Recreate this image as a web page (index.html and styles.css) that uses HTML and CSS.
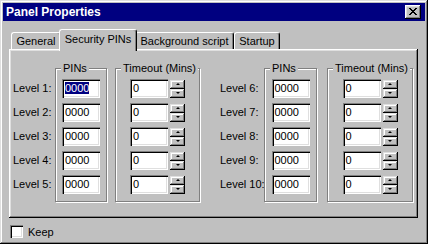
FILE: index.html
```html
<!DOCTYPE html>
<html lang="en">
<head>
    <meta charset="UTF-8">
    <title>Panel Properties</title>
    <link rel="stylesheet" href="styles.css">
</head>
<body>

<div class="window">
    <div class="titlebar">
        <span class="title">Panel Properties</span>
        <div class="close-btn">
            <svg width="8" height="7" viewBox="0 0 8 7" shape-rendering="crispEdges">
                <path fill="#000" d="M0 0h2v1H0z M6 0h2v1H6z M1 1h2v1H1z M5 1h2v1H5z M2 2h4v1H2z M3 3h2v1H3z M2 4h4v1H2z M1 5h2v1H1z M5 5h2v1H5z M0 6h2v1H0z M6 6h2v1H6z"/>
            </svg>
        </div>
    </div>

    <div class="tabs">
        <div class="tab tab-general">General</div>
        <div class="tab tab-pins active">Security PINs</div>
        <div class="tab tab-script">Background script</div>
        <div class="tab tab-startup">Startup</div>
    </div>

    <div class="panel">
        <!-- levels 1 to 5 -->
        <div class="half">
            <div class="labels labels-left">
                <div class="row">Level 1:</div>
                <div class="row">Level 2:</div>
                <div class="row">Level 3:</div>
                <div class="row">Level 4:</div>
                <div class="row">Level 5:</div>
            </div>
            <fieldset class="group pins-left">
                <legend>PINs</legend>
                <div class="row"><div class="field"><span class="selected">0000</span></div></div>
                <div class="row"><div class="field">0000</div></div>
                <div class="row"><div class="field">0000</div></div>
                <div class="row"><div class="field">0000</div></div>
                <div class="row"><div class="field">0000</div></div>
            </fieldset>
            <fieldset class="group timeout-left">
                <legend>Timeout (Mins)</legend>
                <div class="row"><div class="field">0</div><div class="spin"><span class="up"></span><span class="down"></span></div></div>
                <div class="row"><div class="field">0</div><div class="spin"><span class="up"></span><span class="down"></span></div></div>
                <div class="row"><div class="field">0</div><div class="spin"><span class="up"></span><span class="down"></span></div></div>
                <div class="row"><div class="field">0</div><div class="spin"><span class="up"></span><span class="down"></span></div></div>
                <div class="row"><div class="field">0</div><div class="spin"><span class="up"></span><span class="down"></span></div></div>
            </fieldset>
        </div>

        <!-- levels 6 to 10 -->
        <div class="half">
            <div class="labels labels-right">
                <div class="row">Level 6:</div>
                <div class="row">Level 7:</div>
                <div class="row">Level 8:</div>
                <div class="row">Level 9:</div>
                <div class="row">Level 10:</div>
            </div>
            <fieldset class="group pins-right">
                <legend>PINs</legend>
                <div class="row"><div class="field">0000</div></div>
                <div class="row"><div class="field">0000</div></div>
                <div class="row"><div class="field">0000</div></div>
                <div class="row"><div class="field">0000</div></div>
                <div class="row"><div class="field">0000</div></div>
            </fieldset>
            <fieldset class="group timeout-right">
                <legend>Timeout (Mins)</legend>
                <div class="row"><div class="field">0</div><div class="spin"><span class="up"></span><span class="down"></span></div></div>
                <div class="row"><div class="field">0</div><div class="spin"><span class="up"></span><span class="down"></span></div></div>
                <div class="row"><div class="field">0</div><div class="spin"><span class="up"></span><span class="down"></span></div></div>
                <div class="row"><div class="field">0</div><div class="spin"><span class="up"></span><span class="down"></span></div></div>
                <div class="row"><div class="field">0</div><div class="spin"><span class="up"></span><span class="down"></span></div></div>
            </fieldset>
        </div>
    </div>

    <div class="keep">
        <span class="checkbox"></span>
        <span>Keep</span>
    </div>
</div>

</body>
</html>
```

FILE: styles.css
```css
body {
    margin: 0;
    font-family: "Liberation Sans", Arial, sans-serif;
    font-size: 11px;
    color: #000;
    background: #c0c0c0;
}
.window {
    width: 428px;
    height: 244px;
    box-sizing: border-box;
    padding: 3px;
    background: #c0c0c0;
    box-shadow: inset -1px -1px #000, inset 1px 1px #dfdfdf, inset -2px -2px #808080, inset 2px 2px #fff;
}
.titlebar {
    height: 18px;
    background: #000080;
    display: flex;
    align-items: center;
    justify-content: space-between;
    padding: 0 4px 0 3px;
}
.title {
    color: #fff;
    font-weight: bold;
    font-size: 12px;
}
.close-btn {
    width: 16px;
    height: 14px;
    box-sizing: border-box;
    background: #c0c0c0;
    display: flex;
    align-items: center;
    justify-content: center;
    padding: 0 1px 1px 0;
    box-shadow: inset -1px -1px #000, inset 1px 1px #fff, inset -2px -2px #808080, inset 2px 2px #dfdfdf;
}
.close-btn svg {
    display: block;
}

/* tab strip */
.tabs {
    display: flex;
    align-items: flex-end;
    height: 20px;
    margin: 8px 0 0 8px;
    position: relative;
    z-index: 1;
}
.tab {
    height: 17px;
    box-sizing: border-box;
    padding-top: 2px;
    text-align: center;
    white-space: nowrap;
    background: #c0c0c0;
    border-top: 1px solid #fff;
    border-left: 1px solid #fff;
    border-right: 1px solid #000;
    border-radius: 3px 3px 0 0;
    box-shadow: inset -1px 0 #808080;
}
.tab-general { width: 50px; }
.tab-pins { width: 74px; }
.tab-script { width: 99px; }
.tab-startup { width: 46px; }
.tab.active {
    height: 22px;
    width: 78px;
    margin: 0 -2px -2px;
    padding-top: 3px;
    position: relative;
}

/* page */
.panel {
    width: 409px;
    height: 169px;
    box-sizing: border-box;
    margin-left: 6px;
    padding: 13px 0 0 4px;
    display: flex;
    gap: 20px;
    box-shadow: inset -1px -1px #000, inset 1px 1px #fff, inset -2px -2px #808080, inset 2px 2px #dfdfdf;
}
.half {
    display: flex;
    align-items: flex-start;
}
.labels {
    padding-top: 17px;
    display: flex;
    flex-direction: column;
    gap: 5px;
    white-space: nowrap;
}
.labels-left { width: 42px; }
.labels-right { width: 44px; }
.row {
    height: 19px;
    display: flex;
    align-items: center;
}
.labels .row {
    padding-bottom: 2px;
    box-sizing: border-box;
}
.group {
    margin: 0;
    padding: 4px 0 7px;
    min-width: 0;
    box-sizing: border-box;
    border: 1px solid #808080;
    box-shadow: inset 1px 1px #fff, 1px 1px #fff;
    display: flex;
    flex-direction: column;
    align-items: center;
    gap: 5px;
}
.group legend {
    margin-left: 5px;
    padding: 0 2px;
    line-height: 13px;
    white-space: nowrap;
    background: #c0c0c0;
}
.pins-left { width: 52px; }
.timeout-left { width: 85px; margin-left: 8px; }
.pins-right { width: 53px; }
.timeout-right { width: 86px; margin-left: 10px; }

.field {
    width: 38px;
    height: 19px;
    box-sizing: border-box;
    padding: 3px 0 0 3px;
    background: #fff;
    box-shadow: inset 1px 1px #808080, inset 2px 2px #000, inset -1px -1px #fff, inset -2px -2px #dfdfdf;
}
.selected {
    background: #000080;
    color: #fff;
}
.spin {
    width: 15px;
    height: 18px;
    margin-left: 2px;
    display: flex;
    flex-direction: column;
}
.spin span {
    flex: 1;
    display: flex;
    align-items: center;
    justify-content: center;
    box-shadow: inset -1px -1px #000, inset 1px 1px #dfdfdf, inset -2px -2px #808080, inset 2px 2px #fff;
}
.spin span::after {
    content: "";
    width: 0;
    height: 0;
    border-left: 2px solid transparent;
    border-right: 2px solid transparent;
}
.spin .up::after {
    border-bottom: 2px solid #000;
}
.spin .down::after {
    border-top: 2px solid #000;
}

/* bottom checkbox */
.keep {
    display: flex;
    align-items: center;
    gap: 5px;
    margin: 7px 0 0 7px;
}
.checkbox {
    width: 13px;
    height: 13px;
    box-sizing: border-box;
    background: #fff;
    box-shadow: inset 1px 1px #808080, inset 2px 2px #000, inset -1px -1px #fff, inset -2px -2px #dfdfdf;
}
```
